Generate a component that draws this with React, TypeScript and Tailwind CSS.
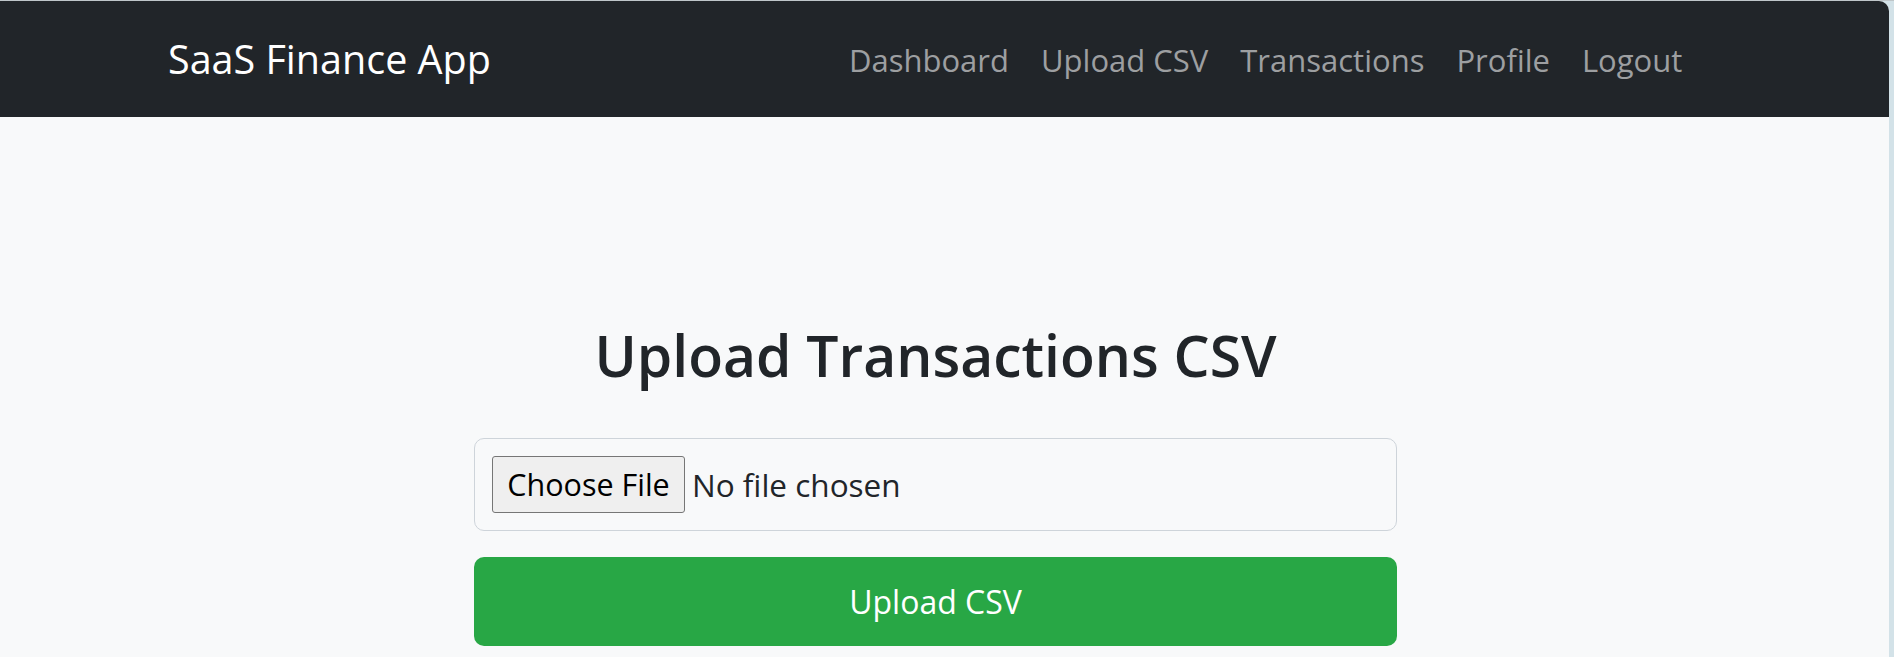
const navLinks = ["Dashboard", "Upload CSV", "Transactions", "Profile", "Logout"];

export default function App() {
  return (
    <div
      className="min-h-screen w-full border-t border-[#bfc6c9] bg-[#d3e2e8] pr-[5px]"
      style={{ fontFamily: '"Open Sans", "Noto Sans", sans-serif' }}
    >
      <div className="min-h-[656px] overflow-hidden rounded-tr-[10px] bg-[#f8f9fa]">
        <nav className="flex h-[116px] items-center bg-[#212529] pt-[2px]">
          <div className="w-[833px] pl-[168px]">
            <span className="text-[39.5px] text-white">SaaS Finance App</span>
          </div>
          <ul className="flex items-center">
            {navLinks.map((link) => (
              <li key={link}>
                <a className="block px-[16px] text-[31px] text-[#9d9fa1]" href="#">
                  {link}
                </a>
              </li>
            ))}
          </ul>
        </nav>

        <main className="pl-[474px] pt-[204px]">
          <div className="w-[923px]">
            <h2 className="text-center text-[57px] font-semibold leading-[1.2] text-[#212529]">
              Upload Transactions CSV
            </h2>

            <div className="mt-[49px] flex h-[93px] items-center rounded-[10px] border border-[#ced4da] bg-[#f8f9fa] pl-[17px]">
              <span className="flex h-[57px] w-[193px] items-center justify-center rounded-[3px] border border-[#767676] bg-[#efefef] text-[30.5px] text-black">
                Choose File
              </span>
              <span className="ml-[7px] text-[31.5px] text-[#212529]">No file chosen</span>
            </div>

            <button className="mt-[26px] flex h-[89px] w-full items-center justify-center rounded-[10px] bg-[#28a745] text-[32px] text-white">
              Upload CSV
            </button>
          </div>
        </main>
      </div>
    </div>
  );
}
